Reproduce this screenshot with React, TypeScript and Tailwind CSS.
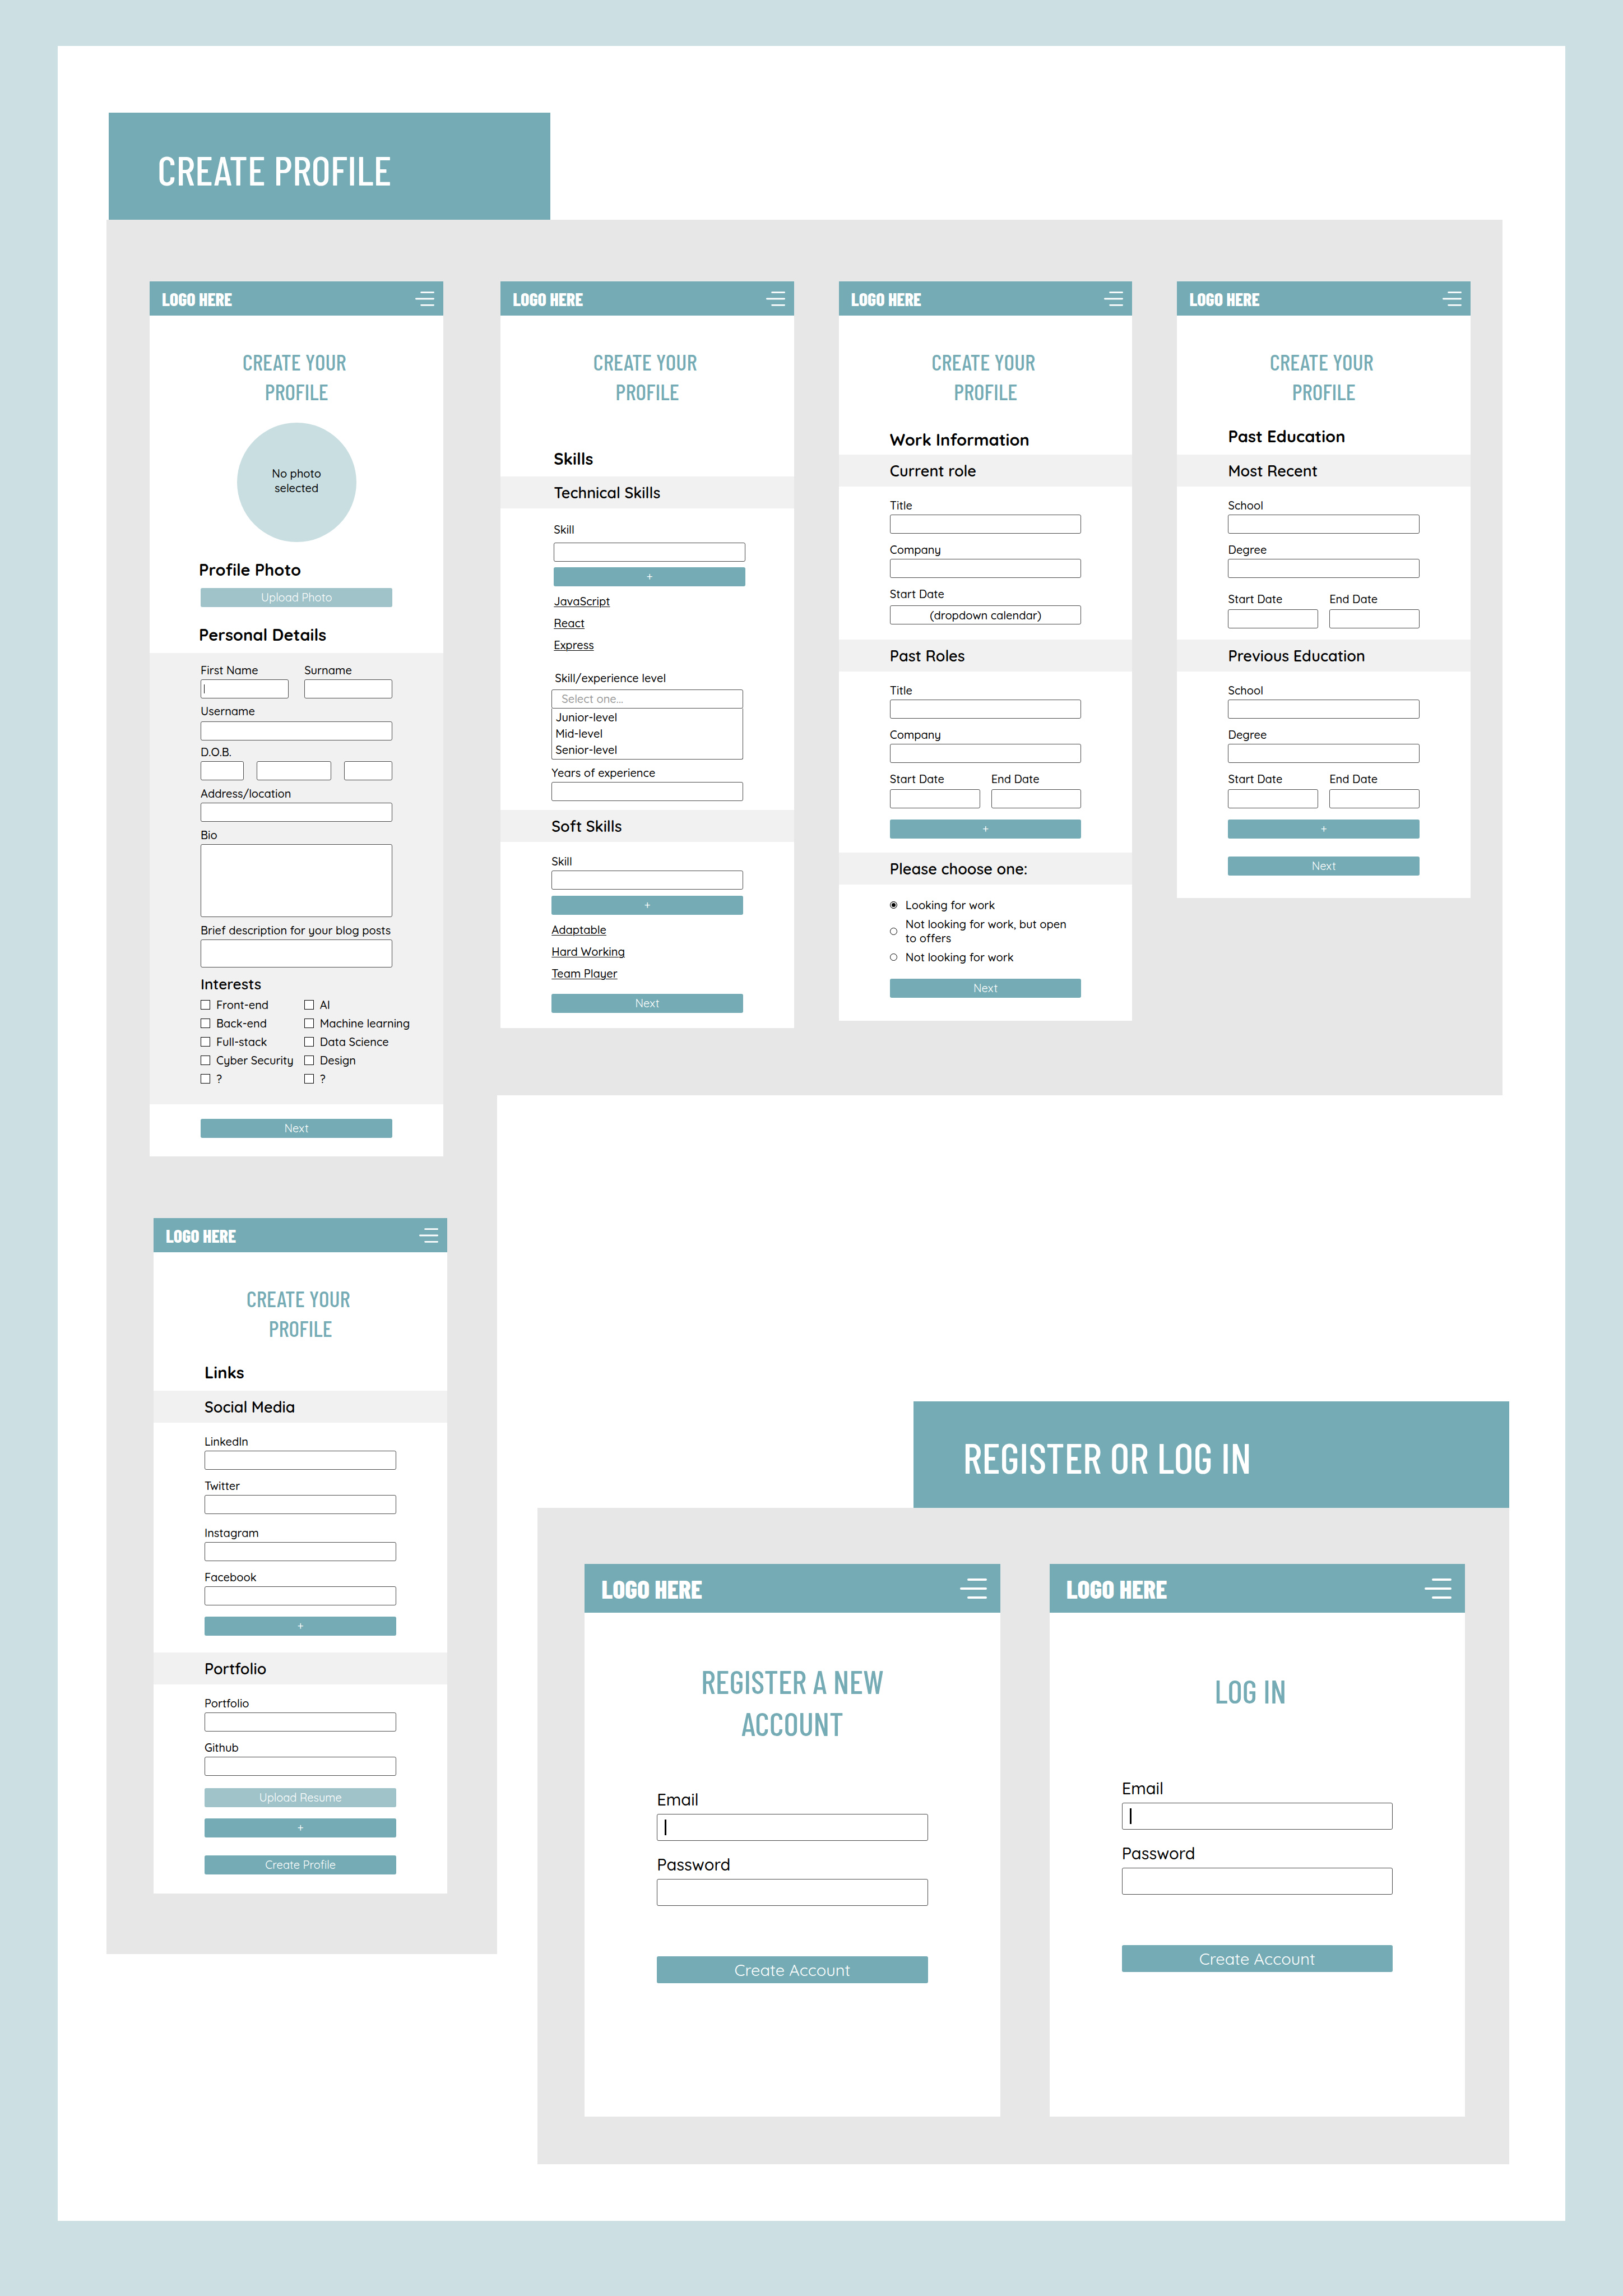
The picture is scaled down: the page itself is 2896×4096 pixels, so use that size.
import React, { useId, type ReactNode } from "react";
import clsx from "clsx";

const heading = "font-[family-name:'Barlow_Condensed','Roboto_Condensed','Open_Sans',sans-serif]";

function MenuIcon({ className }: { className: string }) {
  return (
    <svg viewBox="0 0 48 36" className={className} fill="none" stroke="currentColor" strokeWidth="4" strokeLinecap="round" aria-hidden="true">
      <path d="M15 2H46M2 18H46M15 34H46" />
    </svg>
  );
}

function Screen({ large = false, className, children }: { large?: boolean; className?: string; children: ReactNode }) {
  return (
    <article className={clsx("min-w-0 bg-white", className)}>
      <header
        className={clsx(
          "flex items-center justify-between bg-[#75abb4] text-white",
          large ? "h-[87px] pl-[30px] pr-6" : "h-[61px] pl-[22px] pr-4",
        )}
      >
        <span className={clsx(heading, "font-extrabold", large ? "text-[46px] leading-[48px]" : "text-[32px] leading-9")}>LOGO HERE</span>
        <button type="button" aria-label="Open menu">
          <MenuIcon className={large ? "h-9 w-12" : "h-[26px] w-[34px]"} />
        </button>
      </header>
      {children}
    </article>
  );
}

function ProfileTitle() {
  return (
    <h2 className={clsx(heading, "mt-14 text-center text-[40px] font-medium leading-[53px] text-[#75abb4]")}>
      CREATE YOUR{"\u00a0"}
      <br />
      PROFILE
    </h2>
  );
}

function Title({ className, children }: { className: string; children: ReactNode }) {
  return <h3 className={clsx("text-[29px] font-bold leading-9", className)}>{children}</h3>;
}

function Band({ className, children }: { className: string; children: ReactNode }) {
  return <h4 className={clsx("flex h-[57px] items-center bg-[#f1f1f1] pt-0.5 text-[27px] font-semibold", className)}>{children}</h4>;
}

const box = "block w-full min-w-0 rounded-[3px] border border-[#4a4a4a] bg-white text-black outline-none";

type FieldProps = {
  label: string;
  className?: string;
  gap?: string;
  type?: string;
  value?: string;
  caret?: boolean;
  large?: boolean;
};

function Field({ label, className, gap = "gap-1", type = "text", value, caret = false, large = false }: FieldProps) {
  const id = useId();
  return (
    <div className={clsx("flex min-w-0 flex-col", gap, className)}>
      <label htmlFor={id} className={large ? "text-[29px] leading-9" : "leading-6"}>
        {label}
      </label>
      <div className="relative">
        <input id={id} type={type} defaultValue={value} className={clsx(box, "px-2 text-center", large ? "h-12" : "h-[34px]")} />
        {caret && (
          <span
            aria-hidden="true"
            className={clsx(
              "absolute top-1/2 -translate-y-1/2 bg-black",
              large ? "left-3.5 h-7 w-[3px]" : "left-1.5 h-4 w-px",
            )}
          />
        )}
      </div>
    </div>
  );
}

function AreaField({ label, height, className }: { label: string; height: string; className: string }) {
  const id = useId();
  return (
    <div className={clsx("flex min-w-0 flex-col gap-1", className)}>
      <label htmlFor={id} className="whitespace-nowrap leading-6">{label}</label>
      <textarea id={id} className={clsx(box, "resize-none", height)} />
    </div>
  );
}

function Action({ children, className, light = false, large = false }: { children: ReactNode; className?: string; light?: boolean; large?: boolean }) {
  return (
    <button
      type="button"
      className={clsx(
        "block w-full rounded-[3px] font-normal text-white",
        light ? "bg-[#9fc3c9]" : "bg-[#75abb4]",
        large ? "h-12 text-[29px] leading-[44px]" : "h-[34px] leading-[34px]",
        className,
      )}
    >
      {children}
    </button>
  );
}

function DateRange({ className, gap = "gap-1.5" }: { className: string; gap?: string }) {
  return (
    <div className={clsx("grid grid-cols-2 gap-5", className)}>
      <Field label="Start Date" gap={gap} />
      <Field label="End Date" gap={gap} />
    </div>
  );
}

function LinkList({ items, className }: { items: string[]; className?: string }) {
  return (
    <ul className={clsx("leading-[39px]", className)}>
      {items.map((item) => (
        <li key={item}>
          <a href="#" className="underline decoration-1 underline-offset-2">{item}</a>
        </li>
      ))}
    </ul>
  );
}

function CheckColumn({ items }: { items: string[] }) {
  return (
    <ul className="min-w-0 leading-[33px]">
      {items.map((item) => (
        <li key={item}>
          <label className="flex items-center gap-[11px] whitespace-nowrap">
            <input type="checkbox" className="size-[17px] shrink-0 appearance-none border border-black bg-white" />
            {item}
          </label>
        </li>
      ))}
    </ul>
  );
}

function PersonalScreen() {
  return (
    <Screen className="mr-[7px] pb-[33px]">
      <ProfileTitle />
      <div className="mx-auto mt-[29px] flex size-[213px] items-center justify-center rounded-full bg-[#c9dee1] pb-1.5 text-center leading-[26px]">
        No photo
        <br />
        selected
      </div>
      <Title className="mt-[31px] px-[88px]">Profile Photo</Title>
      <div className="mt-[15px] px-[91px]">
        <Action light>Upload Photo</Action>
      </div>
      <Title className="mt-[31px] px-[88px]">Personal Details</Title>
      <div className="mt-[15px] bg-[#f1f1f1] px-[91px] pb-[29px] pt-[19px]">
        <div className="grid grid-cols-2 gap-7">
          <Field label="First Name" caret />
          <Field label="Surname" />
        </div>
        <Field label="Username" className="mt-[11px]" gap="gap-1.5" />
        <fieldset className="mt-[9px] min-w-0">
          <legend className="leading-6">D.O.B.</legend>
          <div className="mt-1 flex justify-between">
            <input aria-label="Day" className={clsx(box, "h-[34px] max-w-[77px]")} />
            <input aria-label="Month" className={clsx(box, "h-[34px] max-w-[133px]")} />
            <input aria-label="Year" className={clsx(box, "h-[34px] max-w-[86px]")} />
          </div>
        </fieldset>
        <Field label="Address/location" className="mt-3" />
        <AreaField label="Bio" height="h-[130px]" className="mt-3" />
        <AreaField label="Brief description for your blog posts" height="h-[50px]" className="mt-3" />
        <h4 className="mt-[14px] text-[26px] font-semibold leading-8">Interests</h4>
        <div className="mt-1 grid grid-cols-[54%_46%]">
          <CheckColumn items={["Front-end", "Back-end", "Full-stack", "Cyber Security", "?"]} />
          <CheckColumn items={["AI", "Machine learning", "Data Science", "Design", "?"]} />
        </div>
      </div>
      <div className="mt-[26px] px-[91px]">
        <Action>Next</Action>
      </div>
    </Screen>
  );
}

function LinksScreen() {
  return (
    <Screen className="ml-[7px] mt-[110px] pb-[34px]">
      <ProfileTitle />
      <Title className="mt-[34px] px-[91px]">Links</Title>
      <Band className="mt-[15px] px-[91px]">Social Media</Band>
      <div className="px-[91px] pt-[22px]">
        <Field label="LinkedIn" />
        <Field label="Twitter" className="mt-[17px]" />
        <Field label="Instagram" className="mt-[22px]" />
        <Field label="Facebook" className="mt-[17px]" />
        <Action className="mt-5">+</Action>
      </div>
      <Band className="mt-[30px] px-[91px]">Portfolio</Band>
      <div className="px-[91px] pt-[22px]">
        <Field label="Portfolio" />
        <Field label="Github" className="mt-[17px]" />
        <Action light className="mt-[22px]">Upload Resume</Action>
        <Action className="mt-5">+</Action>
        <Action className="mt-8">Create Profile</Action>
      </div>
    </Screen>
  );
}

function SkillsScreen() {
  const id = useId();
  return (
    <Screen className="pb-[27px]">
      <ProfileTitle />
      <Title className="mt-[75px] pl-[95px]">Skills</Title>
      <Band className="mt-[14px] pl-[95px]">Technical Skills</Band>
      <div className="pl-[95px] pr-[87px] pt-[26px]">
        <Field label="Skill" gap="gap-[11px]" />
        <Action className="mt-2.5">+</Action>
        <LinkList items={["JavaScript", "React", "Express"]} className="mt-[7px]" />
      </div>
      <div className="px-[91px] pt-7">
        <label htmlFor={id} className="block pl-1.5 leading-6">Skill/experience level</label>
        <select id={id} defaultValue="" className="mt-2 block h-[34px] w-full appearance-none rounded-[3px] border border-[#4a4a4a] bg-white pl-[17px] text-[#999999] outline-none">
          <option value="">Select one...</option>
          <option>Junior-level</option>
          <option>Mid-level</option>
          <option>Senior-level</option>
        </select>
        <ul role="listbox" aria-label="Skill/experience level" className="rounded-b-[3px] border border-t-0 border-[#4a4a4a] pb-0.5 pl-1.5 pt-px leading-[29px]">
          <li role="option" aria-selected="false">Junior-level</li>
          <li role="option" aria-selected="false">Mid-level</li>
          <li role="option" aria-selected="false">Senior-level</li>
        </ul>
        <Field label="Years of experience" className="mt-3" />
      </div>
      <Band className="mt-4 px-[91px]">Soft Skills</Band>
      <div className="px-[91px] pt-[23px]">
        <Field label="Skill" />
        <Action className="mt-[11px]">+</Action>
        <LinkList items={["Adaptable", "Hard Working", "Team Player"]} className="mt-[7px]" />
        <Action className="mt-[17px]">Next</Action>
      </div>
    </Screen>
  );
}

function Choice({ checked = false, children }: { checked?: boolean; children: ReactNode }) {
  return (
    <label className="flex items-center gap-[15px] pr-5 leading-[25px]">
      <input
        type="radio"
        name="availability"
        defaultChecked={checked}
        className="size-[13px] shrink-0 appearance-none rounded-full border border-black bg-white checked:bg-black checked:shadow-[inset_0_0_0_2px_white]"
      />
      <span>{children}</span>
    </label>
  );
}

function WorkScreen() {
  return (
    <Screen className="pb-[41px]">
      <ProfileTitle />
      <Title className="mt-[41px] px-[91px]">Work Information</Title>
      <Band className="mt-[9px] px-[91px]">Current role</Band>
      <div className="px-[91px] pt-[22px]">
        <Field label="Title" />
        <Field label="Company" className="mt-[17px]" />
        <Field label="Start Date" className="mt-[17px]" gap="gap-2" value="(dropdown calendar)" />
      </div>
      <Band className="mt-[27px] px-[91px]">Past Roles</Band>
      <div className="px-[91px] pt-[22px]">
        <Field label="Title" />
        <Field label="Company" className="mt-[17px]" />
        <DateRange className="mt-[17px]" />
        <Action className="mt-5">+</Action>
      </div>
      <Band className="mt-[25px] px-[91px]">Please choose one:</Band>
      <div className="flex flex-col gap-[9px] px-[91px] pt-6">
        <Choice checked>Looking for work</Choice>
        <Choice>Not looking for work, but open to offers</Choice>
        <Choice>Not looking for work</Choice>
      </div>
      <div className="mt-[26px] px-[91px]">
        <Action>Next</Action>
      </div>
    </Screen>
  );
}

function EducationScreen() {
  return (
    <Screen className="pb-10">
      <ProfileTitle />
      <Title className="mt-[35px] px-[91px]">Past Education</Title>
      <Band className="mt-[15px] px-[91px]">Most Recent</Band>
      <div className="px-[91px] pt-[22px]">
        <Field label="School" />
        <Field label="Degree" className="mt-[17px]" />
        <DateRange className="mt-[26px]" />
      </div>
      <Band className="mt-5 px-[91px]">Previous Education</Band>
      <div className="px-[91px] pt-[22px]">
        <Field label="School" />
        <Field label="Degree" className="mt-[17px]" />
        <DateRange className="mt-[17px]" />
        <Action className="mt-5">+</Action>
        <Action className="mt-8">Next</Action>
      </div>
    </Screen>
  );
}

function AccountForm({ className }: { className: string }) {
  return (
    <form className={clsx("px-[129px]", className)}>
      <Field label="Email" type="email" large caret gap="gap-2" />
      <Field label="Password" type="password" large gap="gap-2" className="mt-6" />
      <Action large className="mt-[90px]">Create Account</Action>
    </form>
  );
}

export default function App() {
  return (
    <div className="bg-[#ccdfe3] px-[103px] pb-[134px] pt-[82px] font-[family-name:Quicksand,Inter,sans-serif] text-xl font-medium text-black">
      <main className="bg-white pb-[101px] pl-[87px] pr-[100px] pt-[119px]">
        <h1 className={clsx(heading, "ml-1 flex h-[191px] w-[31.5%] items-center bg-[#75abb4] pl-[87px] pt-2.5 text-[74px] text-white")}>
          CREATE PROFILE
        </h1>
        <div className="grid grid-cols-[697fr_1805fr] items-start">
          <section aria-label="Profile details and links" className="min-w-0 bg-[#e7e7e7] pb-[108px] pl-[77px] pr-[89px] pt-[110px]">
            <PersonalScreen />
            <LinksScreen />
          </section>
          <div className="min-w-0">
            <section aria-label="Skills, work and education" className="mr-3 grid grid-cols-3 items-start gap-20 bg-[#e7e7e7] pb-[120px] pl-1.5 pr-[57px] pt-[110px]">
              <SkillsScreen />
              <WorkScreen />
              <EducationScreen />
            </section>
            <section className="ml-[72px] mt-[546px]">
              <h1 className={clsx(heading, "ml-auto flex h-[190px] w-[61.3%] items-center bg-[#75abb4] pl-[88px] pt-2 text-[75px] text-white")}>
                REGISTER OR LOG IN
              </h1>
              <div className="grid grid-cols-2 gap-[88px] bg-[#e7e7e7] pb-[85px] pl-[84px] pr-[79px] pt-[100px]">
                <Screen large className="pb-[238px]">
                  <h2 className={clsx(heading, "mt-[85px] text-center text-[57px] font-medium leading-[75px] text-[#75abb4]")}>
                    REGISTER A NEW
                    <br />
                    ACCOUNT
                  </h2>
                  <AccountForm className="mt-20" />
                </Screen>
                <Screen large>
                  <h2 className={clsx(heading, "mt-[102px] pr-6 text-center text-[57px] font-medium leading-[75px] text-[#75abb4]")}>LOG IN</h2>
                  <AccountForm className="mt-[118px]" />
                </Screen>
              </div>
            </section>
          </div>
        </div>
      </main>
    </div>
  );
}
